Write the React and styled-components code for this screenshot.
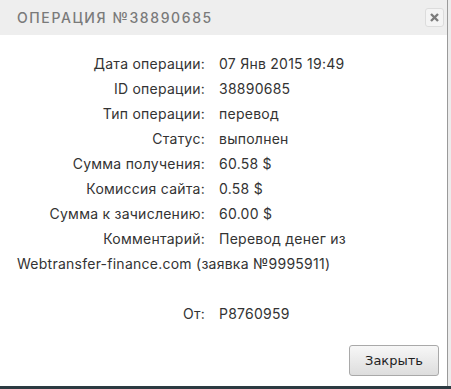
import styled, { createGlobalStyle } from "styled-components";

const GlobalStyle = createGlobalStyle`
  html, body {
    margin: 0;
    padding: 0;
    background: #2c3a41;
  }
  body {
    font-family: Inter, "Open Sans", sans-serif;
  }
`;

const Screen = styled.div`
  display: flex;
  height: 386px;
  background: #ececec;
`;

const Dialog = styled.div`
  width: 447px;
  border-right: 1px solid #9a9a9a;
  background: #fff;
  display: flex;
  flex-direction: column;
`;

const Header = styled.div`
  height: 35px;
  background: #eeeeee;
  display: flex;
  align-items: center;
  justify-content: space-between;
  padding: 0 3px 0 17px;
`;

const Title = styled.h2`
  margin: 0;
  font-size: 14px;
  font-weight: 500;
  letter-spacing: 1.6px;
  color: #7a7a7a;
  text-transform: uppercase;
`;

const CloseIcon = styled.button`
  width: 19px;
  height: 19px;
  padding: 0;
  border: 1px solid #dcdcdc;
  border-radius: 3px;
  background: #f4f4f4;
  color: #7c7c7c;
  display: flex;
  align-items: center;
  justify-content: center;
  cursor: pointer;
`;

const Body = styled.div`
  flex: 1;
  padding: 16px 17px 0;
  font-size: 14px;
  line-height: 25px;
  letter-spacing: 0.25px;
  color: #333333;
`;

const Line = styled.div`
  min-height: 25px;
`;

const Label = styled.span`
  display: inline-block;
  width: 188px;
  margin-right: 14px;
  text-align: right;
`;

const NoBreak = styled.span`
  white-space: nowrap;
`;

const Footer = styled.div`
  display: flex;
  justify-content: flex-end;
  padding: 0 8px 10px;
`;

const Button = styled.button`
  width: 90px;
  height: 31px;
  border: 1px solid #a9a9a9;
  border-radius: 3px;
  background: linear-gradient(#f7f7f7, #dddddd);
  font-family: "DejaVu Sans", sans-serif;
  font-size: 13px;
  color: #1e1e1e;
  cursor: pointer;
`;

const rows = [
  ["Дата операции:", "07 Янв 2015 19:49"],
  ["ID операции:", "38890685"],
  ["Тип операции:", "перевод"],
  ["Статус:", "выполнен"],
  ["Сумма получения:", "60.58 $"],
  ["Комиссия сайта:", "0.58 $"],
  ["Сумма к зачислению:", "60.00 $"],
  [
    "Комментарий:",
    <>
      Перевод денег из <NoBreak>Webtransfer-finance.com</NoBreak> (заявка №9995911)
    </>,
  ],
];

export default function App() {
  return (
    <>
      <GlobalStyle />
      <Screen>
        <Dialog>
          <Header>
            <Title>Операция №38890685</Title>
            <CloseIcon aria-label="close">
              <svg width="9" height="9" viewBox="0 0 9 9">
                <path d="M1 1L8 8M8 1L1 8" stroke="#7c7c7c" strokeWidth="2.4" />
              </svg>
            </CloseIcon>
          </Header>
          <Body>
            {rows.map(([label, value]) => (
              <Line key={label}>
                <Label>{label}</Label>
                {value}
              </Line>
            ))}
            <Line />
            <Line>
              <Label>От:</Label>
              P8760959
            </Line>
          </Body>
          <Footer>
            <Button>Закрыть</Button>
          </Footer>
        </Dialog>
      </Screen>
    </>
  );
}
